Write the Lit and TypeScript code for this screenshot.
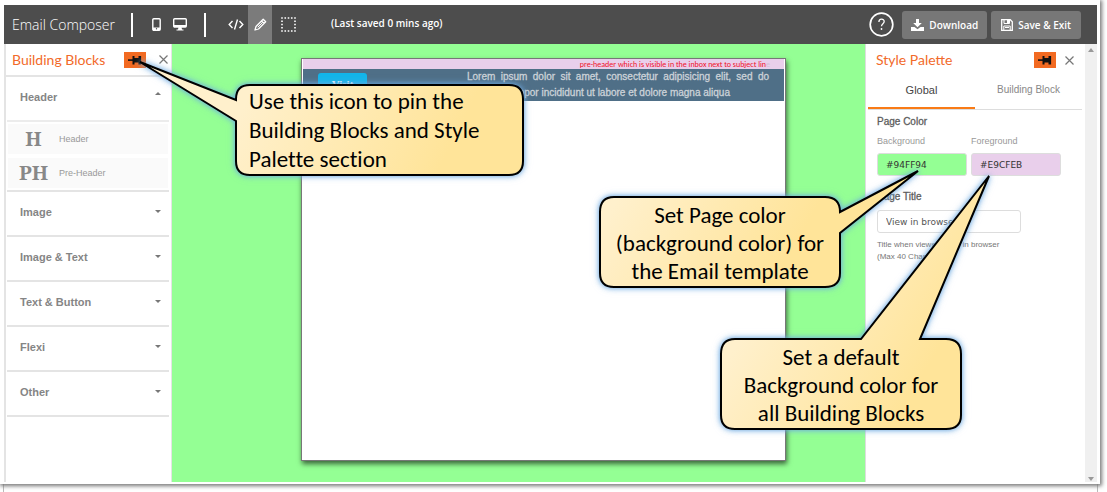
import { LitElement, html, css, svg } from "lit";
import { customElement, property, state } from "lit/decorators.js";
import { classMap } from "lit/directives/class-map.js";

const pinIcon = html`<svg width="22" height="16" viewBox="0 0 22 16" aria-hidden="true">
  <path d="M4 7.300h5v1.600H4z" fill="#111" />
  <path d="M8.500 4h2v2h4V4h2.600v8.400h-2.600v-2h-4v2h-2z" fill="#111" />
</svg>`;

const closeIcon = html`<svg width="9" height="9" viewBox="0 0 9 9" aria-hidden="true">
  <path d="M.5.500l8 8M8.500.500l-8 8" stroke="#777" stroke-width="1.200" fill="none" />
</svg>`;

@customElement("callout-note")
export class CalloutNote extends LitElement {
  @property({ type: Number }) width = 240;
  @property({ type: Number }) height = 90;
  @property() outline = "";

  static styles = css`
    :host { display: block; pointer-events: none; }
    .note { position: relative; display: grid; }
    .shape { position: absolute; inset: 0; overflow: visible; filter: drop-shadow(0 0 2px rgba(110, 170, 225, 0.7)) drop-shadow(0 0 3px rgba(110, 170, 225, 0.7)); }
    .words { position: relative; }
  `;

  render() {
    return html`<div class="note">
      <svg class="shape" width=${this.width} height=${this.height} aria-hidden="true">
        <defs>
          <linearGradient id="fill" gradientUnits="userSpaceOnUse" x1="20" y1="0" x2=${this.width * 0.7} y2=${this.height}>
            <stop offset="0" stop-color="#fff0cc" />
            <stop offset="1" stop-color="#ffe499" />
          </linearGradient>
        </defs>
        ${svg`<path d=${this.outline} fill="url(#fill)" stroke="#000" stroke-width="2" stroke-linejoin="miter" />`}
      </svg>
      <div class="words"><slot></slot></div>
    </div>`;
  }
}

@customElement("blocks-panel")
export class BlocksPanel extends LitElement {
  @state() private open = "Header";

  static styles = css`
    :host { display: block; background: #fff; border-left: 2px solid #e4e4e4; border-right: 1px solid #e4e4e4; font-family: "Liberation Sans", Arial, sans-serif; }
    button { font: inherit; border: 0; background: none; padding: 0; cursor: pointer; }
    .head { display: flex; align-items: center; height: 31px; padding: 0 3px 0 6px; }
    h2 { margin: 0; flex: 1; font: 14px/20px Lato, sans-serif; color: #f26a2a; }
    .pin { display: flex; background: #f26a21; }
    .close { display: flex; margin-left: 13px; }
    .list { border-top: 2px solid #e4e4e4; padding: 0 2px 0 1px; }
    .group { border-bottom: 2px solid #e4e4e4; }
    .row { display: flex; width: 100%; height: 43px; align-items: center; justify-content: space-between; padding: 0 8px 4px 13px; font-size: 11px; line-height: 14px; font-weight: bold; color: #858585; }
    .arrow { width: 0; height: 0; border: 3px solid transparent; border-top-color: #777; border-bottom-width: 0; }
    .up { border-top-width: 0; border-bottom: 3px solid #777; margin-bottom: 6px; }
    .items { display: grid; gap: 4px; padding: 2px 1px; border-top: 2px solid #ececec; }
    .item { display: grid; grid-template-columns: 51px 1fr; align-items: center; height: 30px; background: #fafafa; text-align: left; font-size: 9px; color: #999; }
    .glyph { font: bold 20px/24px "Noto Serif", "Liberation Serif", serif; color: #888; text-align: center; }
  `;

  private toggle(name: string) {
    this.open = this.open === name ? "" : name;
  }

  render() {
    const groups = ["Header", "Image", "Image & Text", "Text & Button", "Flexi", "Other"];
    return html`
      <div class="head">
        <h2>Building Blocks</h2>
        <button class="pin" aria-label="Pin building blocks">${pinIcon}</button>
        <button class="close" aria-label="Close building blocks">${closeIcon}</button>
      </div>
      <div class="list">
        ${groups.map((name) => {
          const open = this.open === name;
          return html`<div class="group">
            <button class="row" aria-expanded=${open} @click=${() => this.toggle(name)}>
              <span>${name}</span><i class=${classMap({ arrow: true, up: open })}></i>
            </button>
            ${open && name === "Header"
              ? html`<div class="items">
                  <button class="item"><span class="glyph">H</span><span>Header</span></button>
                  <button class="item"><span class="glyph">PH</span><span>Pre-Header</span></button>
                </div>`
              : ""}
          </div>`;
        })}
      </div>`;
  }
}

@customElement("style-panel")
export class StylePanel extends LitElement {
  @state() private tab = "Global";

  static styles = css`
    :host { display: block; background: #fff; border-left: 1px solid #ddd; font-family: "Liberation Sans", Arial, sans-serif; }
    button { font: inherit; border: 0; background: none; padding: 0; cursor: pointer; }
    .head { display: flex; align-items: center; height: 32px; padding: 0 11px 0 10px; }
    h2 { margin: 0; flex: 1; font: 14px/20px Lato, sans-serif; color: #f26a2a; }
    .pin { display: flex; background: #f26a21; }
    .close { display: flex; margin-left: 9px; }
    .tabs { display: grid; grid-template-columns: 1fr 1fr; margin: 0 3px 0 2px; border-bottom: 1px solid #ddd; }
    .tab { height: 33px; padding-bottom: 4px; font-size: 10px; color: #888; border-bottom: 2px solid transparent; }
    .on { font-size: 11px; color: #444; border-color: #f97b16; }
    .form { padding: 5px 22px 0 11px; color: #777; }
    h3 { margin: 0; font-size: 10px; line-height: 14px; font-weight: 400; color: #555; -webkit-text-stroke: 0.3px #666; }
    .pair { display: grid; grid-template-columns: 90px 90px; gap: 4px; margin: 6px 0 14px; }
    .field { display: grid; gap: 5px; font-size: 9px; line-height: 13px; color: #999; }
    input { box-sizing: border-box; width: 100%; height: 23px; border: 1px solid #ddd; border-radius: 3px; padding: 0 8px; font: 9px "DejaVu Sans", sans-serif; color: #333; }
    .back { background: #94ff94; }
    .fore { background: #e9cfeb; }
    .title { display: grid; gap: 6px; width: 144px; }
    .title input { color: #555; }
    .hint { margin: 6px 0 0; font-size: 8px; line-height: 12px; }
  `;

  render() {
    return html`
      <div class="head">
        <h2>Style Palette</h2>
        <button class="pin" aria-label="Pin style palette">${pinIcon}</button>
        <button class="close" aria-label="Close style palette">${closeIcon}</button>
      </div>
      <div class="tabs" role="tablist">
        ${["Global", "Building Block"].map(
          (name) => html`<button role="tab" aria-selected=${this.tab === name}
            class=${classMap({ tab: true, on: this.tab === name })} @click=${() => (this.tab = name)}>${name}</button>`
        )}
      </div>
      <div class="form">
        <h3>Page Color</h3>
        <div class="pair">
          <label class="field">Background<input class="back" value="#94FF94" /></label>
          <label class="field">Foreground<input class="fore" value="#E9CFEB" /></label>
        </div>
        <div class="title">
          <h3><label for="title">Page Title</label></h3>
          <input id="title" value="View in browser" />
        </div>
        <p class="hint">Title when viewed page in browser<br />(Max 40 Characters)</p>
      </div>`;
  }
}

@customElement("app-root")
export class AppRoot extends LitElement {
  static styles = css`
    :host { display: flex; flex-direction: column; height: 100vh; background: #fff; position: relative; overflow: hidden; }
    button { font: inherit; color: inherit; border: 0; background: none; padding: 0; cursor: pointer; }
    .frame { flex: 1; min-height: 0; display: flex; flex-direction: column; position: relative; background: #fff; margin-right: 7px; padding: 5px 3px 2px 4px; box-shadow: 1px 1px 4px 1px #777; }
    .under { height: 8px; margin: 0 9px 0 3px; border: solid #bbb; border-width: 0 1px; }
    .bar { display: flex; align-items: center; height: 39px; background: #4d4d4d; color: #fff; font: 11px/16px "Open Sans", sans-serif; }
    h1 { margin: 0 19px 0 8px; width: 100px; font: 300 14px/20px "Open Sans", sans-serif; color: #fff; white-space: nowrap; }
    .rule { width: 2px; height: 24px; background: #fff; }
    .tool { display: flex; align-items: center; justify-content: center; height: 39px; width: 24px; }
    .devices { display: flex; margin: 0 12px 0 11px; }
    .modes { display: flex; margin-left: 18px; }
    .active { background: #7b7b7b; }
    .wide { width: 32px; }
    .saved { flex: 1; margin: 0 0 4px 27px; font: 600 10px/16px "Open Sans", sans-serif; }
    .help { display: flex; margin-right: 8px; }
    .action { display: flex; align-items: center; justify-content: center; gap: 5px; height: 28px; padding: 0 9px; background: #777; border-radius: 3px; font: 600 10px/16px "Open Sans", sans-serif; margin-right: 4px; }
    .last { margin-right: 16px; padding: 0 10px; }
    .work { flex: 1; min-height: 0; display: grid; grid-template-columns: 168px 1fr 220px 12px; }
    .canvas { display: flex; background: #94ff94; padding: 14px 79px 21px 129px; }
    .page { flex: 1; background: #fff; border: 1px solid #777; box-shadow: 1px 3px 5px rgba(0, 0, 0, 0.6); font-family: "Liberation Sans", Arial, sans-serif; }
    .pre { margin: 0 1px; height: 10px; padding-right: 14px; background: #e9cfeb; color: #f01028; font: 8px/11px Carlito, Lato, sans-serif; text-align: right; }
    .faint { color: #d2bfd4; }
    .block { display: grid; grid-template-columns: 49px 302px; justify-content: space-between; margin: 0 1px; height: 32px; padding: 0 15px; background: #4f6f87; overflow: hidden; }
    .visit { width: 49px; height: 22px; margin-top: 4px; background: #12b5ea; color: #fff; border-radius: 3px; font: bold 11px/20px "Liberation Serif", serif; }
    .lorem { margin: 0; font: 10px/16px "Liberation Sans", Arial, sans-serif; color: #ccd2d8; text-align: justify; -webkit-text-stroke: 0.3px #ccd2d8; }
    .scroll { display: flex; flex-direction: column; justify-content: space-between; align-items: center; background: #f0f0f0; padding: 4px 0 1px; }
    callout-note { position: absolute; font: 23px/28px "Carlito", "Lato", sans-serif; font-variant-ligatures: none; color: #000; white-space: nowrap; }
    .one { left: 235px; top: 84px; width: 288px; }
    .two { right: 266px; top: 197px; width: 242px; text-align: center; }
    .three { right: 145px; top: 339px; width: 242px; text-align: center; }
    .copy { margin: 0; padding: 3px 14px 0; line-height: 29px; }
    .tight { line-height: 28px; padding: 4px 0 0; }
  `;

  render() {
    return html`
      <div class="frame">
        <header class="bar">
          <h1>Email Composer</h1>
          <i class="rule"></i>
          <div class="devices">
            <button class="tool" aria-label="Phone view">
              <svg width="9" height="13" viewBox="0 0 9 13"><rect x=".8" y=".8" width="7.400" height="11.400" rx="1" fill="none" stroke="#fff" stroke-width="1.400" /><path d="M1 9.500h7V12H1z" fill="#fff" /><circle cx="4.500" cy="10.700" r=".7" fill="#4d4d4d" /></svg>
            </button>
            <button class="tool" aria-label="Desktop view">
              <svg width="14" height="13" viewBox="0 0 14 13"><rect x=".7" y=".7" width="12.600" height="8.300" rx="1" fill="none" stroke="#fff" stroke-width="1.400" /><path d="M1 7h12v2H1zM5.500 9h3l.5 2.500h1.500v1h-7v-1H5z" fill="#fff" /></svg>
            </button>
          </div>
          <i class="rule"></i>
          <div class="modes">
            <button class="tool" aria-label="Code">
              <svg width="16" height="11" viewBox="0 0 16 11"><path d="M4.500 2L1.200 5.500 4.500 9M11.500 2l3.300 3.500L11.500 9M9.500 .5l-3 10" fill="none" stroke="#fff" stroke-width="1.400" /></svg>
            </button>
            <button class="tool active" aria-label="Edit">
              <svg width="13" height="13" viewBox="0 0 13 13"><path d="M1 12L2 8.500L9.200 1.300L11.700 3.800L4.500 11ZM7.500 3L10 5.500" fill="none" stroke="#fff" stroke-width="1.300" stroke-linejoin="round" /><path d="M3.800 9.200L8.300 4.700" stroke="#fff" /><path d="M1 12L1.500 10.200L2.800 11.500Z" fill="#fff" /></svg>
            </button>
            <button class="tool wide" aria-label="Select area">
              <svg width="15" height="15" viewBox="0 0 15 15"><rect x="1" y="1" width="13" height="13" fill="none" stroke="#fff" stroke-width="1.600" stroke-dasharray="1.600 1.650" stroke-dashoffset=".8" /></svg>
            </button>
          </div>
          <span class="saved">(Last saved 0 mins ago)</span>
          <button class="help" aria-label="Help">
            <svg width="25" height="25" viewBox="0 0 25 25"><circle cx="12.500" cy="12.500" r="11.300" fill="none" stroke="#fff" stroke-width="1.700" /><path d="M9.900 10c0-3.700 5.300-3.600 5.300-.4 0 2.200-2.700 2.100-2.700 4.700" fill="none" stroke="#fff" stroke-width="1.300" /><circle cx="12.500" cy="17" r=".9" fill="#fff" /></svg>
          </button>
          <button class="action">
            <svg width="13" height="12" viewBox="0 0 13 12"><path d="M5 0h3v4h2.800L6.500 8.200 2.200 4H5z" fill="#fff" /><path d="M0 8h3.500l3 2.300 3-2.300H13v4H0z" fill="#fff" /></svg>
            Download
          </button>
          <button class="action last">
            <svg width="12" height="12" viewBox="0 0 12 12"><path d="M.7.700h8.600l2 2v8.600H.7z" fill="none" stroke="#fff" stroke-width="1.300" /><path d="M3 1v3.500h5.500V1M2.800 11V7h6.400v4M4 8.500h4" fill="none" stroke="#fff" /><path d="M6 1h2v3H6z" fill="#fff" /></svg>
            Save &amp; Exit
          </button>
        </header>
        <main class="work">
          <blocks-panel></blocks-panel>
          <section class="canvas">
            <article class="page">
              <div class="pre">pre-header which is visible in the inbox next to subject lin<span class="faint">e</span></div>
              <div class="block">
                <button class="visit">Visit</button>
                <p class="lorem">Lorem ipsum dolor sit amet, consectetur adipisicing elit, sed do eiusmod tempor incididunt ut labore et dolore magna aliqua</p>
              </div>
            </article>
          </section>
          <style-panel></style-panel>
          <div class="scroll">
            <svg width="6" height="4" viewBox="0 0 6 4"><path d="M3 0l3 4H0z" fill="#999" /></svg>
            <svg width="6" height="4" viewBox="0 0 6 4"><path d="M0 0h6L3 4z" fill="#999" /></svg>
          </div>
        </main>
      </div>
      <div class="under"></div>
      <callout-note class="one" .width=${288} .height=${91}
        .outline=${"M1 16V15Q1 1 15 1H274Q288 1 288 15V77Q288 91 274 91H15Q1 91 1 77V37L-95 -22L1 16Z"}>
        <p class="copy">Use this icon to pin the<br />Building Blocks and Style<br />Palette section</p>
      </callout-note>
      <callout-note class="two" .width=${242} .height=${91}
        .outline=${"M15 0H226Q241 0 241 15L319 -26L241 36V76Q241 90 226 90H15Q1 90 1 76V15Q1 0 15 0Z"}>
        <p class="copy tight">Set Page color<br />(background color) for<br />the Email template</p>
      </callout-note>
      <callout-note class="three" .width=${242} .height=${91}
        .outline=${"M15 0H141L269 -163L200 0H226Q241 0 241 15V76Q241 90 226 90H15Q1 90 1 76V15Q1 0 15 0Z"}>
        <p class="copy tight">Set a default<br />Background color for<br />all Building Blocks</p>
      </callout-note>
    `;
  }
}
